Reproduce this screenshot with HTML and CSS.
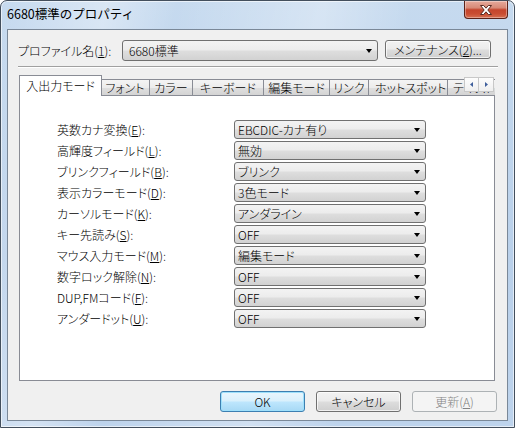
FILE: index.html
```html
<!DOCTYPE html>
<html lang="ja">
<head>
<meta charset="utf-8">
<title>6680標準のプロパティ</title>
<link rel="stylesheet" href="styles.css">
</head>
<body>
<div class="window">
  <div class="titlebar">
    <span class="title">6680標準のプロパティ</span>
    <div class="close">
      <svg width="14" height="10" viewBox="0 0 14 10"><path d="M1.5 0.5h3.2L7 3.2 9.3 0.5h3.2L8.8 5l3.7 4.5H9.3L7 6.8 4.7 9.5H1.5L5.2 5z" fill="#fff" stroke="#5a2a22" stroke-width="1" stroke-linejoin="round"/></svg>
    </div>
  </div>
  <div class="client">
    <div class="profile-row">
      <span class="profile-label">プロファイル名(<u>1</u>):</span>
      <div class="combo combo-wide">6680標準<span class="arrow"></span></div>
      <div class="btn btn-maint">メンテナンス(<u>2</u>)...</div>
    </div>
    <div class="sep"></div>
    <div class="tabs">
      <div class="tabstrip">
        <div class="tab tab-sel t1">入出力モード</div>
        <div class="tab t2">フォント</div>
        <div class="tab t3">カラー</div>
        <div class="tab t4">キーボード</div>
        <div class="tab t5">編集モード</div>
        <div class="tab t6">リンク</div>
        <div class="tab t7">ホットスポット</div>
        <div class="tab t8">テキスト</div>
      </div>
      <div class="tab-scroll">
        <span class="scroll-btn"><svg width="3" height="5" viewBox="0 0 3 5"><path d="M3 0v5L0 2.5z" fill="#3f5f9c"/></svg></span>
        <span class="scroll-btn"><svg width="3" height="5" viewBox="0 0 3 5"><path d="M0 0v5l3-2.5z" fill="#3f5f9c"/></svg></span>
      </div>
      <div class="panel">
        <div class="form">
          <span class="label">英数カナ変換(<u>E</u>):</span>
          <div class="combo">EBCDIC-カナ有り<span class="arrow"></span></div>
          <span class="label">高輝度フィールド(<u>L</u>):</span>
          <div class="combo">無効<span class="arrow"></span></div>
          <span class="label">ブリンクフィールド(<u>B</u>):</span>
          <div class="combo">ブリンク<span class="arrow"></span></div>
          <span class="label">表示カラーモード(<u>D</u>):</span>
          <div class="combo">3色モード<span class="arrow"></span></div>
          <span class="label">カーソルモード(<u>K</u>):</span>
          <div class="combo">アンダライン<span class="arrow"></span></div>
          <span class="label">キー先読み(<u>S</u>):</span>
          <div class="combo">OFF<span class="arrow"></span></div>
          <span class="label">マウス入力モード(<u>M</u>):</span>
          <div class="combo">編集モード<span class="arrow"></span></div>
          <span class="label">数字ロック解除(<u>N</u>):</span>
          <div class="combo">OFF<span class="arrow"></span></div>
          <span class="label">DUP,FMコード(<u>F</u>):</span>
          <div class="combo">OFF<span class="arrow"></span></div>
          <span class="label">アンダードット(<u>U</u>):</span>
          <div class="combo">OFF<span class="arrow"></span></div>
        </div>
      </div>
    </div>
    <div class="footer">
      <div class="btn btn-default">OK</div>
      <div class="btn">キャンセル</div>
      <div class="btn btn-disabled">更新(<u>A</u>)</div>
    </div>
  </div>
</div>
</body>
</html>
```
FILE: styles.css
```css
html, body {
  margin: 0;
  padding: 0;
  background: #fff;
}
body {
  font-family: "Noto Sans CJK JP", "Noto Sans", sans-serif;
  font-size: 12px;
  font-weight: 300;
  color: #000;
}
.window {
  width: 515px;
  height: 428px;
  box-sizing: border-box;
  border: 1px solid #434f5d;
  border-radius: 7px 7px 0 0;
  background:
    linear-gradient(100deg, rgba(255,255,255,0) 0%, rgba(255,255,255,0.35) 18%, rgba(255,255,255,0) 30%, rgba(255,255,255,0.3) 55%, rgba(255,255,255,0) 70%),
    linear-gradient(180deg, #c6daef 0%, #b9d0ea 60%, #bdd3ec 100%);
  box-shadow: inset 0 0 0 1px rgba(255,255,255,0.6);
  display: flex;
  flex-direction: column;
  overflow: hidden;
}
.titlebar {
  height: 28px;
  display: flex;
  justify-content: space-between;
  align-items: flex-start;
}
.title {
  margin: 5px 0 0 6px;
  font-size: 12.5px;
  line-height: 16px;
  font-weight: 400;
  color: #000;
}
.close {
  width: 44px;
  height: 18px;
  margin-right: 6px;
  box-sizing: border-box;
  border: 1px solid #5b2219;
  border-top: none;
  border-radius: 0 0 4px 4px;
  background: linear-gradient(180deg, #e6aa9c 0%, #d88a77 40%, #c5452d 52%, #c94d32 75%, #d66f52 100%);
  box-shadow: inset 0 0 0 1px rgba(255,255,255,0.35);
  display: flex;
  align-items: center;
  justify-content: center;
}
.close svg { display: block; }
.client {
  margin: 0 6px 6px 6px;
  flex: 1;
  border: 1px solid #7a8898;
  background: #f0f0f0;
  display: flex;
  flex-direction: column;
}
.profile-row {
  display: flex;
  align-items: flex-start;
  margin: 10px 0 0 10px;
}
.profile-label {
  width: 104px;
  line-height: 21px;
  font-feature-settings: "palt";
}
u { text-decoration: underline; text-underline-offset: 1px; }
.combo {
  position: relative;
  box-sizing: border-box;
  height: 19px;
  border: 1px solid #707070;
  border-radius: 3px;
  background: linear-gradient(180deg, #f3f3f3 0%, #ececec 48%, #dedede 52%, #d2d2d2 100%);
  padding: 0 14px 0 3px;
  line-height: 17px;
  white-space: nowrap;
  font-feature-settings: "palt";
}
.combo-wide {
  width: 256px;
  height: 21px;
  line-height: 19px;
  padding-left: 6px;
}
.arrow {
  position: absolute;
  right: 5px;
  top: 50%;
  margin-top: -2px;
  width: 0;
  height: 0;
  border-top: 4px solid #000;
  border-left: 3.5px solid transparent;
  border-right: 3.5px solid transparent;
}
.btn {
  box-sizing: border-box;
  width: 85px;
  height: 21px;
  border: 1px solid #707070;
  border-radius: 3px;
  background: linear-gradient(180deg, #f2f2f2 0%, #ebebeb 48%, #dddddd 52%, #cfcfcf 100%);
  box-shadow: inset 0 0 0 1px rgba(255,255,255,0.7);
  text-align: center;
  line-height: 19px;
  font-feature-settings: "palt";
}
.btn-maint {
  width: 106px;
  height: 19px;
  line-height: 17px;
  margin-left: 7px;
}
.btn-default {
  border-color: #3c7fb1;
  background: linear-gradient(180deg, #eaf6fd 0%, #d9f0fc 48%, #bee6fd 52%, #a7d9f5 100%);
  box-shadow: inset 0 0 0 1px #9ee0fb;
}
.btn-disabled {
  border-color: #adb2b5;
  background: #f4f4f4;
  box-shadow: none;
  color: #838383;
}
.sep {
  margin: 5px 9px 0 10px;
  border-top: 1px solid #a0a0a0;
  border-bottom: 1px solid #ffffff;
}
.tabs {
  position: relative;
  margin: 7px 0 0 11px;
  width: 476px;
}
.tabstrip {
  position: relative;
  z-index: 1;
  height: 21px;
  margin-bottom: -1px;
  display: flex;
  align-items: flex-start;
  overflow: hidden;
  font-feature-settings: "palt";
}
.tab {
  flex: none;
  box-sizing: border-box;
  margin-top: 4px;
  height: 16px;
  border: 1px solid #898c95;
  border-bottom: none;
  margin-left: -1px;
  background: linear-gradient(180deg, #f4f4f4 0%, #ececec 50%, #dfdfdf 52%, #d4d4d4 100%);
  text-align: center;
  line-height: 15px;
  white-space: nowrap;
  overflow: hidden;
}
.tab-sel {
  margin-top: 0;
  margin-left: 0;
  height: 21px;
  background: #fff;
  line-height: 19px;
  position: relative;
  z-index: 2;
  margin-right: -1px;
}
.t1 { width: 83px; }
.t2 { width: 50px; }
.t3 { width: 44px; }
.t4 { width: 72px; }
.t5 { width: 67px; }
.t6 { width: 40px; }
.t7 { width: 80px; text-align: left; padding-left: 6px; }
.t8 { width: 60px; text-align: left; padding-left: 5px; }
.tab-scroll {
  position: absolute;
  z-index: 3;
  right: 1px;
  top: 2px;
  display: flex;
  background: #f6f6f6;
}
.scroll-btn {
  box-sizing: border-box;
  width: 15px;
  height: 15px;
  border: 1px solid #c8c8c8;
  background: linear-gradient(180deg, #fdfdfd 0%, #efefef 100%);
  display: flex;
  align-items: center;
  justify-content: center;
}
.scroll-btn + .scroll-btn { border-left: none; }
.panel {
  box-sizing: border-box;
  height: 286px;
  border: 1px solid #898c95;
  background: #fff;
  padding: 24px 0 0 37px;
}
.form {
  display: grid;
  grid-template-columns: 177px 192px;
  grid-auto-rows: 19px;
  row-gap: 2px;
  align-items: center;
}
.label {
  line-height: 19px;
  white-space: nowrap;
  font-feature-settings: "palt";
}
.footer {
  margin-top: 10px;
  padding-right: 10px;
  display: flex;
  justify-content: flex-end;
  gap: 11px;
}
```
